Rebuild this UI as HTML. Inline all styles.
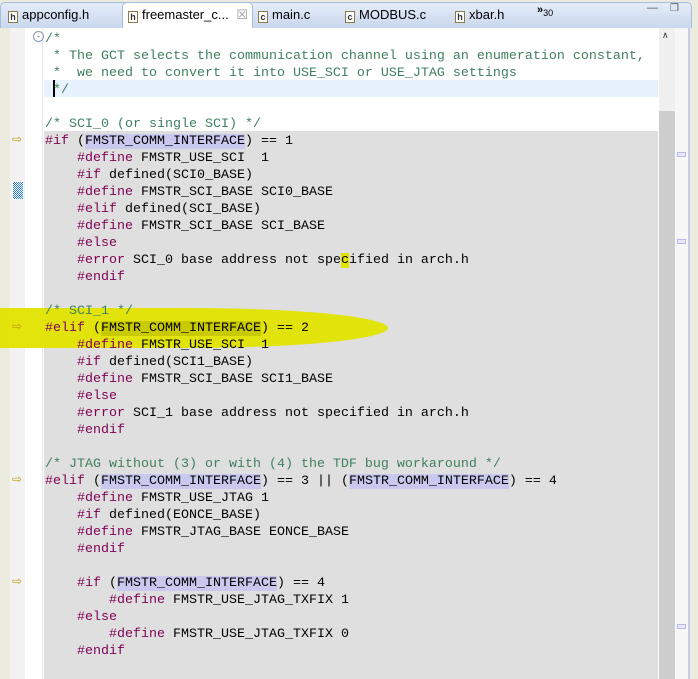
<!DOCTYPE html>
<html><head><style>
*{margin:0;padding:0;box-sizing:border-box}
body{width:698px;height:679px;overflow:hidden;background:#ecebe0;position:relative;font-family:"Liberation Sans",sans-serif}
.tabbar{position:absolute;left:0;top:2px;width:692px;height:26px;background:linear-gradient(#e4ecf8,#c9d8ee);border:1px solid #a9bcd9;border-bottom:none;border-radius:5px 5px 0 0}
.tab{position:absolute;top:7px;font-size:13px;color:#000;white-space:nowrap}
.ic{display:inline-block;width:10px;height:12px;border:1px solid #8a7a4a;background:#fff;font-size:9px;line-height:10px;text-align:center;color:#333;vertical-align:-1px;margin-right:4px;font-weight:bold}
.active{position:absolute;left:122px;top:2px;width:131px;height:27px;background:#fff;border:1px solid #a9bcd9;border-bottom:none;border-radius:5px 5px 0 0}
.editor{position:absolute;left:0;top:28px;width:690px;height:651px;background:#fff}
.g1{position:absolute;left:0;top:28px;width:10px;height:651px;background:#ecebe0}
.g2{position:absolute;left:10px;top:28px;width:15px;height:651px;background:#f2f2f2}
.sep{position:absolute;left:42px;top:28px;width:1px;height:651px;background:#e8e8e8}
.gray{position:absolute;left:44px;top:131px;width:614px;height:548px;background:#dfdfdf}
.cur{position:absolute;left:44px;top:80px;width:614px;height:17px;background:#e8f2fe}
.sb{position:absolute;left:659px;top:28px;width:16px;height:651px;background:#f0f0f0}
.thumb{position:absolute;left:659px;top:111px;width:16px;height:568px;background:#cdcdcd}
.ov{position:absolute;left:675px;top:28px;width:13px;height:651px;background:#f7f7f7}
.ovl{position:absolute;left:688px;top:28px;width:2px;height:651px;background:#c5cde6}
.mk{position:absolute;left:677px;width:9px;height:5px;border:1px solid #b8b8ee;background:#e8e8fa}
pre{position:absolute;left:45px;top:31px;font-family:"Liberation Mono",monospace;font-size:13.33px;line-height:17px;color:#000}
.c{color:#3f7f5f}.d{color:#7f0055}.h{background:#c9c9f0}
.arr{position:absolute;left:12px;color:#c89a10;font-size:12px;line-height:17px}
.yl{position:absolute;left:-10px;top:308px;width:398px;height:40px;background:#e3e300;border-radius:0 50% 50% 0/0 50% 50% 0;opacity:.95}
</style></head><body>
<div class="tabbar"></div>
<div class="tab" style="left:8px"><span class="ic">h</span>appconfig.h</div>
<div class="active"></div>
<div class="tab" style="left:128px"><span class="ic">h</span>freemaster_c... <span style="color:#999;margin-left:4px">&#x2612;</span></div>
<div class="tab" style="left:258px"><span class="ic">c</span>main.c</div>
<div class="tab" style="left:345px"><span class="ic">c</span>MODBUS.c</div>
<div class="tab" style="left:455px"><span class="ic">h</span>xbar.h</div>
<div class="tab" style="left:537px;top:4px;font-size:11px"><b>»</b><sub style="font-size:9px">30</sub></div>
<div class="tab" style="left:647px;top:2px;font-size:11px;color:#555">&#x2014;</div>
<div class="tab" style="left:670px;top:3px;font-size:10px;color:#555">&#x2750;</div>
<div class="editor"></div>
<div class="g1"></div><div class="g2"></div><div class="sep"></div>
<div class="cur"></div>
<div class="gray"></div>
<div class="sb"></div><div class="thumb"></div>
<div class="tab" style="left:662px;top:30px;font-size:9px;color:#333">&#x2227;</div>
<div class="ov"></div><div class="ovl"></div>
<div class="mk" style="top:152px"></div><div class="mk" style="top:239px"></div><div class="mk" style="top:624px"></div>
<div class="yl"></div>
<div style="position:absolute;left:33px;top:31px;width:11px;height:11px;border:1px solid #8a97b0;border-radius:50%;font-size:9px;line-height:8px;text-align:center;color:#555">-</div>
<div class="arr" style="top:131px">&#x21E8;</div>
<div class="arr" style="top:318px">&#x21E8;</div>
<div class="arr" style="top:471px">&#x21E8;</div>
<div class="arr" style="top:573px">&#x21E8;</div>
<div style="position:absolute;left:13px;top:182px;width:10px;height:17px;background:repeating-conic-gradient(#2a7fd8 0 25%,#fff 0 50%) 0 0/2px 2px"></div>
<div style="position:absolute;left:53px;top:80px;width:2px;height:17px;background:#000"></div>
<pre><span class="c">/*
 * The GCT selects the communication channel using an enumeration constant,
 *  we need to convert it into USE_SCI or USE_JTAG settings
 */</span>

<span class="c">/* SCI_0 (or single SCI) */</span>
<span class="d">#if</span> (<span class="h">FMSTR_COMM_INTERFACE</span>) == 1
    <span class="d">#define</span> FMSTR_USE_SCI  1
    <span class="d">#if</span> defined(SCI0_BASE)
    <span class="d">#define</span> FMSTR_SCI_BASE SCI0_BASE
    <span class="d">#elif</span> defined(SCI_BASE)
    <span class="d">#define</span> FMSTR_SCI_BASE SCI_BASE
    <span class="d">#else</span>
    <span class="d">#error</span> SCI_0 base address not spe<span style="background:#e3e300">c</span>ified in arch.h
    <span class="d">#endif</span>

<span class="c">/* SCI_1 */</span>
<span class="d">#elif</span> (<span style="background:#c9c900">FMSTR_COMM_INTERFACE</span>) == 2
    <span class="d">#define</span> FMSTR_USE_SCI  1
    <span class="d">#if</span> defined(SCI1_BASE)
    <span class="d">#define</span> FMSTR_SCI_BASE SCI1_BASE
    <span class="d">#else</span>
    <span class="d">#error</span> SCI_1 base address not specified in arch.h
    <span class="d">#endif</span>

<span class="c">/* JTAG without (3) or with (4) the TDF bug workaround */</span>
<span class="d">#elif</span> (<span class="h">FMSTR_COMM_INTERFACE</span>) == 3 || (<span class="h">FMSTR_COMM_INTERFACE</span>) == 4
    <span class="d">#define</span> FMSTR_USE_JTAG 1
    <span class="d">#if</span> defined(EONCE_BASE)
    <span class="d">#define</span> FMSTR_JTAG_BASE EONCE_BASE
    <span class="d">#endif</span>

    <span class="d">#if</span> (<span class="h">FMSTR_COMM_INTERFACE</span>) == 4
        <span class="d">#define</span> FMSTR_USE_JTAG_TXFIX 1
    <span class="d">#else</span>
        <span class="d">#define</span> FMSTR_USE_JTAG_TXFIX 0
    <span class="d">#endif</span>
</pre>
</body></html>
